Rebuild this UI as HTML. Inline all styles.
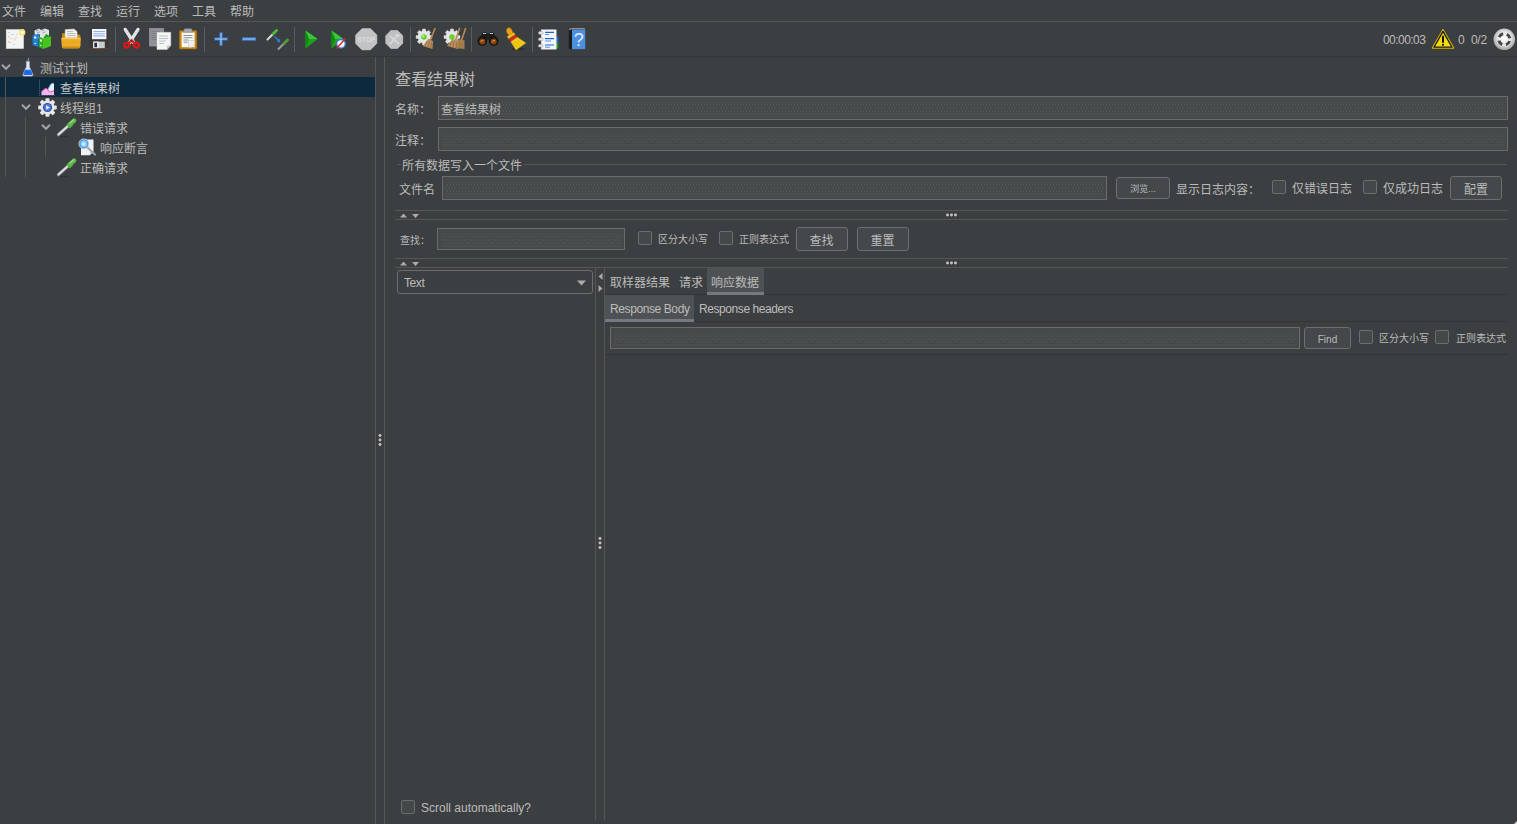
<!DOCTYPE html>
<html lang="zh-CN">
<head>
<meta charset="utf-8">
<title>Apache JMeter</title>
<style>
*{box-sizing:border-box;margin:0;padding:0}
html,body{width:1517px;height:824px;overflow:hidden;background:#3c3f41}
body{position:relative;font-family:"Liberation Sans","Noto Sans CJK SC",sans-serif;font-size:12px;color:#bbbbbb;line-height:1}
.a{position:absolute;white-space:nowrap}
.t{position:absolute;white-space:nowrap;height:16px;line-height:18px;font-size:12px;color:#bbb}
.s{font-size:10px}
.hl{position:absolute;height:1px;background:#555656}
.vl{position:absolute;width:1px;background:#555656}
.dk{background:#323436}
.inp{position:absolute;background:#45494a;border:1px solid #6a6c6c}
.inp::before{content:"";position:absolute;left:3px;top:5px;right:3px;bottom:2px;background-image:radial-gradient(circle,#565a5b .55px,transparent .7px),radial-gradient(circle,#565a5b .55px,transparent .7px);background-size:3px 6px,3px 6px;background-position:0 0,1.5px 3px;opacity:.8}
.btn{position:absolute;background:#44484a;border:1px solid #6c6f70;border-radius:3px;text-align:center;color:#bbb}
.cb{position:absolute;width:14px;height:14px;background:#43494a;border:1px solid #6b6d6e;border-radius:2px}
.ico{position:absolute;width:22px;height:22px}
.tsep{position:absolute;width:1px;top:27px;height:25px;background:#5a5d5f}
svg{display:block;overflow:visible}
</style>
</head>
<body>
<!-- MENU -->
<div id="menubar">
<div class="t" style="left:2px;top:3px">文件</div>
<div class="t" style="left:40px;top:3px">编辑</div>
<div class="t" style="left:78px;top:3px">查找</div>
<div class="t" style="left:116px;top:3px">运行</div>
<div class="t" style="left:154px;top:3px">选项</div>
<div class="t" style="left:192px;top:3px">工具</div>
<div class="t" style="left:230px;top:3px">帮助</div>
</div>
<div class="hl" style="left:0;top:21px;width:1517px;background:#555656"></div>
<!-- TOOLBAR -->
<div id="toolbar">
<!-- new -->
<svg class="a" style="left:5px;top:28px" width="22" height="22" viewBox="0 0 22 22"><rect x="1.2" y="1.6" width="17.4" height="19" fill="#f4f4f2" stroke="#d9d9d6" stroke-width=".6"/><g fill="#bcd3ee"><rect x="3" y="4" width="2" height="1"/><rect x="6" y="6" width="3" height="1"/><rect x="10" y="9" width="2" height="1"/><rect x="4" y="14" width="2" height="1"/><rect x="8" y="16" width="2" height="1"/></g><g fill="#f3b6c8"><rect x="3" y="8" width="1.4" height="1.4"/><rect x="9" y="11" width="1.4" height="1.4"/><rect x="3" y="13" width="1.4" height="1.4"/></g><g fill="#f4dc8a"><rect x="5" y="10" width="3" height="1"/><rect x="11" y="6" width="2" height="1"/></g><circle cx="17.2" cy="4.4" r="3.2" fill="#f3e27a"/><circle cx="17.2" cy="4.4" r="1.6" fill="#fffbe0"/></svg>
<!-- open books -->
<svg class="a" style="left:32px;top:28px" width="22" height="22" viewBox="0 0 22 22"><path d="M2.5 2.5L7 .5L9 2L13 .5L17 2V11H3z" fill="#dfe4e8"/><path d="M4 3l3-1.2M9.5 3l3-1.2M5 5l3-1.2M10.5 5l3-1.2" stroke="#8d969e" stroke-width=".8"/><path d="M.6 7.2L6.5 5.8V19L.6 17z" fill="#1f7fd6"/><path d="M6.5 5.800000000000001L8 6.5V19.5L6.500000000000001 19z" fill="#135ea8"/><path d="M7 8.5L11 10.5V21L7 19z" fill="#2fae16"/><path d="M11 10.5L19 8.5V18L11 21z" fill="#45c41f"/><path d="M11 10.5L14 6L19 8.5" fill="#2a9a12"/><rect x="2" y="8.5" width="2.4" height="2" fill="#e9f3ff"/><rect x="8" y="11.5" width="2" height="2" fill="#e9ffe4"/><circle cx="3.3" cy="15.5" r=".8" fill="#e9f3ff"/><circle cx="8.8" cy="17.5" r=".8" fill="#e9ffe4"/></svg>
<!-- open folder -->
<svg class="a" style="left:60px;top:28px" width="22" height="22" viewBox="0 0 22 22"><path d="M2 5.2H6.5L8 6.5H19.5L20.5 8V19H2z" fill="#c98a14"/><path d="M5.2 1.6L14 1L17 3.6L17.4 11H5z" fill="#f6f6f4" stroke="#c4c4c1" stroke-width=".5"/><path d="M14 1V3.600000000000001H17" fill="#dcdcd9"/><path d="M7 3.6h6M7 5.6h8.5M7 7.6h8.5" stroke="#9aa5b1" stroke-width=".8"/><path d="M1.2 10.8C1.2 10 1.8 9.4 2.600000000000001 9.4H19.5C20.3 9.4 20.9 10 20.8 10.8L20 19C19.9 19.8 19.3 20.4 18.5 20.4H3.5C2.7 20.4 2.1 19.8 2 19z" fill="#ecac28"/><path d="M2.2 10.6H19.8" stroke="#f7cf6c" stroke-width="1.1"/><path d="M2.600000000000001 19.2H19.400000000000002" stroke="#c58610" stroke-width="1.3"/><path d="M3 14.500000000000002H19" stroke="#e0a020" stroke-width=".8" stroke-dasharray="1.5 1.5"/></svg>
<!-- save floppy -->
<svg class="a" style="left:88px;top:28px" width="22" height="22" viewBox="0 0 22 22"><path d="M1.5 1.5H19L20.6 3.1V20.5H1.5z" fill="#3b3735"/><rect x="4" y="1" width="14.4" height="10.2" fill="#f3f6fa"/><path d="M5.5 3.5h11.4M5.5 5.7h11.4M5.5 7.9h11.4" stroke="#8db4e8" stroke-width="1.1"/><rect x="5.2" y="13.600000000000001" width="11.6" height="7" fill="#c9cccf"/><rect x="5.2" y="13.600000000000001" width="5.6" height="7" fill="#e6e8ea"/><rect x="6.4" y="14.8" width="2.6" height="4.4" fill="#2b2826"/><path d="M1.5 20.5H20.6" stroke="#6d3b2b" stroke-width=".8"/></svg>
<div class="tsep" style="left:115px"></div>
<!-- cut -->
<svg class="a" style="left:121px;top:27px" width="22" height="23" viewBox="0 0 22 23"><path d="M4.2 2.4L12.6 15.500000000000002" stroke="#e6e8ea" stroke-width="3.3" stroke-linecap="round"/><path d="M17 2.4L8.6 15.500000000000002" stroke="#e6e8ea" stroke-width="3.3" stroke-linecap="round"/><path d="M4.6 3L12 14.500000000000002M16.6 3L9.2 14.500000000000002" stroke="#aebccc" stroke-width=".7" stroke-dasharray="1.2 1.2"/><ellipse cx="5.8" cy="18.2" rx="2.6" ry="2.2" transform="rotate(-35 5.8 18.2)" fill="none" stroke="#e01616" stroke-width="2.2"/><ellipse cx="15.4" cy="18.2" rx="2.6" ry="2.2" transform="rotate(35 15.4 18.2)" fill="none" stroke="#e01616" stroke-width="2.2"/><path d="M7.500000000000001 16.2L10.6 13.4L13.700000000000001 16.2" stroke="#e01616" stroke-width="2.2" fill="none" stroke-linejoin="round"/><circle cx="10.6" cy="13.2" r=".9" fill="#3a3a3a"/></svg>
<!-- copy -->
<svg class="a" style="left:148px;top:28px" width="24" height="22" viewBox="0 0 24 22"><rect x="1.5" y=".5" width="14" height="17.5" fill="#8e9094" stroke="#a4a6aa" stroke-width=".6"/><path d="M3.5 3.5h9M3.5 5.5h9M3.500000000000001 7.500000000000001h9M3.5 9.5h9M3.5 11.5h5" stroke="#7a7c80" stroke-width=".8"/><path d="M9 4.3H22.8V17.5L19 21.5H9z" fill="#f5f5f3" stroke="#cfcfcc" stroke-width=".5"/><path d="M19 21.5V17.500000000000004H22.8z" fill="#c4c6c8"/><path d="M11 8h9M11 10.5h9M11 13h7M11 15.500000000000002h5" stroke="#a9b3bd" stroke-width=".8"/></svg>
<!-- paste -->
<svg class="a" style="left:178px;top:28px" width="20" height="22" viewBox="0 0 20 22"><rect x="1.4" y="2.5" width="17.4" height="18.5" rx="1" fill="#c8860f" stroke="#9a6508" stroke-width=".6"/><rect x="3.6" y="4.4" width="13" height="14.8" fill="#f6f6f4"/><path d="M6.5 .8h7l1.2 3.400000000000001H5.3z" fill="#a8abad" stroke="#7d8082" stroke-width=".5"/><path d="M5.5 7.500000000000001h9M5.5 9.700000000000001h9M5.5 12h5M5.500000000000001 14.200000000000001h4" stroke="#7f868c" stroke-width=".9"/><path d="M10.5 12.5h6v3.7l-2.8 3H10.500000000000002z" fill="#eef1f4" stroke="#b9bec3" stroke-width=".5"/></svg>
<div class="tsep" style="left:204px"></div>
<!-- plus -->
<svg class="a" style="left:214px;top:32px" width="14" height="14" viewBox="0 0 14 14"><path d="M7 .3V13.700000000000001M.3 7H13.700000000000001" stroke="#3b78cf" stroke-width="3.2"/><path d="M7 1V13M1 7H13" stroke="#a9ccf5" stroke-width="1.1"/></svg>
<!-- minus -->
<svg class="a" style="left:242px;top:36px" width="14" height="6" viewBox="0 0 14 6"><path d="M0 3H14" stroke="#3b78cf" stroke-width="3.6"/><path d="M.8 3H13.200000000000001" stroke="#a9ccf5" stroke-width="1.1"/></svg>
<!-- toggle -->
<svg class="a" style="left:266px;top:28px" width="23" height="22" viewBox="0 0 23 22"><path d="M1.5 11.500000000000002L7 6" stroke="#d6d9db" stroke-width="2" stroke-linecap="round"/><path d="M7.2 5.800000000000001L10.5 2.5" stroke="#55b23c" stroke-width="3" stroke-linecap="round"/><path d="M12.5 21L18 15.500000000000002" stroke="#9a9ea1" stroke-width="2" stroke-linecap="round"/><path d="M18.2 15.3L21.5 12" stroke="#4d9a3a" stroke-width="3" stroke-linecap="round"/><path d="M8.5 8.5L13 13" stroke="#2f7be0" stroke-width="1.4"/><path d="M14.5 14.5L10.6 13.8L13.8 10.6z" fill="#2f7be0"/></svg>
<div class="tsep" style="left:294px"></div>
<!-- start -->
<svg class="a" style="left:305px;top:30px" width="13" height="19" viewBox="0 0 13 19"><path d="M.5 .5L12.5 9L.5 18.5z" fill="#1ea21e"/><path d="M.5 .5L12.5 9L4 9z" fill="#39c93a"/><path d="M.5 .5L4 9L.5 18.5z" fill="#118a12"/></svg>
<!-- start no pauses -->
<svg class="a" style="left:331px;top:30px" width="16" height="19" viewBox="0 0 16 19"><path d="M.5 .5L12.5 9L.5 18.5z" fill="#1ea21e"/><path d="M.5 .5L12.5 9L4 9z" fill="#39c93a"/><path d="M.5 .5L4 9L.5 18.5z" fill="#118a12"/><circle cx="10" cy="13.8" r="4.3" fill="#f2f6fb" stroke="#3a7bd5" stroke-width="1.3"/><path d="M5.5 18.5L14.5 8.5" stroke="#e02020" stroke-width="1.3"/></svg>
<!-- stop -->
<svg class="a" style="left:354.5px;top:27.5px" width="22.5" height="22.5" viewBox="0 0 24 24"><path d="M7.5 .8H16.5L23.2 7.500000000000001V16.5L16.5 23.2H7.500000000000001L.8 16.5V7.500000000000001z" fill="#c2c3c4" stroke="#d2d3d4" stroke-width=".8"/><text x="12" y="15" text-anchor="middle" font-family="Liberation Sans,sans-serif" font-weight="bold" font-size="8" fill="#dcdddd" textLength="19" lengthAdjust="spacingAndGlyphs">STOP</text></svg>
<!-- shutdown -->
<svg class="a" style="left:385px;top:29.5px" width="18.5" height="19" viewBox="0 0 19 20"><path d="M6 .6H13L18.4 6V14L13 19.400000000000002H6L.6 14V6z" fill="#bfc0c1" stroke="#cccdce" stroke-width=".7"/><path d="M5 14.500000000000002L13.500000000000002 6M5.5 6.5L14 14.500000000000002" stroke="#d6d7d8" stroke-width="1.8" stroke-linecap="round"/><path d="M10.5 5.2c2-.9 4 .3 4.300000000000001 2" stroke="#d6d7d8" stroke-width="1.6" fill="none"/></svg>
<div class="tsep" style="left:410px"></div>
<!-- clear -->
<svg class="a" style="left:415px;top:27px" width="22" height="23" viewBox="0 0 22 23"><g transform="translate(9 10)"><g fill="#dcdee0"><rect x="-1.8" y="-8.2" width="3.6" height="16.4" rx=".8"/><rect x="-1.8" y="-8.2" width="3.6" height="16.4" rx=".8" transform="rotate(45)"/><rect x="-1.8" y="-8.2" width="3.6" height="16.4" rx=".8" transform="rotate(90)"/><rect x="-1.8" y="-8.2" width="3.6" height="16.4" rx=".8" transform="rotate(135)"/></g><circle r="6.2" fill="#e3e5e7"/><circle r="2.8" fill="#6fd02a"/><circle cx="-.6" cy="-.8" r="1.1" fill="#c6f59a"/></g><path d="M20 1.5L15 13.500000000000002" stroke="#b98a55" stroke-width="1.6" stroke-linecap="round"/><path d="M13 12L18 14L17.5 22L8 19z" fill="#b78d5c"/><path d="M12 14.500000000000002L10 19.5M14.500000000000002 14.500000000000002L13 20.5M16.5 15.500000000000002L16 21.5" stroke="#8f6a3e" stroke-width=".7"/></svg>
<!-- clear all -->
<svg class="a" style="left:443px;top:27px" width="24" height="23" viewBox="0 0 24 23"><g transform="translate(9 10)"><g fill="#dcdee0"><rect x="-1.8" y="-8.2" width="3.6" height="16.4" rx=".8"/><rect x="-1.8" y="-8.2" width="3.6" height="16.4" rx=".8" transform="rotate(45)"/><rect x="-1.8" y="-8.2" width="3.6" height="16.4" rx=".8" transform="rotate(90)"/><rect x="-1.8" y="-8.2" width="3.6" height="16.4" rx=".8" transform="rotate(135)"/></g><circle r="6.2" fill="#e3e5e7"/><circle r="2.8" fill="#6fd02a"/></g><path d="M16.5 1.5L12.5 13.500000000000002M22.5 1.5L18.5 13.500000000000002" stroke="#b98a55" stroke-width="1.6" stroke-linecap="round"/><path d="M9.5 12L16 13.500000000000002L15 22L4 19z" fill="#b78d5c"/><path d="M15.500000000000002 12L21.5 13.500000000000002L21.5 22L13 21z" fill="#a88050"/><path d="M8.5 14.500000000000002L7 19.5M11 14.500000000000002L10 20.5M13.500000000000002 15.500000000000002L13 21.5M17 15.500000000000002L16.5 21.5M19.5 15.500000000000002L19.5 21.5" stroke="#8f6a3e" stroke-width=".7"/></svg>
<div class="tsep" style="left:471px"></div>
<!-- binoculars -->
<svg class="a" style="left:477px;top:31px" width="22" height="16" viewBox="0 0 22 16"><path d="M5.5 1.5h3.5l2 2l2-2h3.500000000000001l3 6H2.5z" fill="#1c1c1c"/><path d="M6 2.5h3M13 2.5h3" stroke="#bfc2c5" stroke-width="1"/><circle cx="5.3" cy="10" r="4.8" fill="#161616"/><circle cx="16.7" cy="10" r="4.8" fill="#161616"/><circle cx="5.3" cy="10.4" r="3" fill="#8a4414"/><circle cx="16.7" cy="10.4" r="3" fill="#8a4414"/><path d="M3.5 10.5l3-1.2M15 10.5l3-1.2" stroke="#e8902a" stroke-width="1.1"/><rect x="9.5" y="5" width="3" height="4" fill="#222"/></svg>
<!-- broom -->
<svg class="a" style="left:504px;top:27px" width="23" height="24" viewBox="0 0 23 24"><ellipse cx="14" cy="22" rx="7" ry="1.4" fill="#2d2f31"/><path d="M3.6 1.2c1.600000000000001-1 3.8.2 4.4 2.2l1.200000000000001 4.4l-3.2 1.6L3 5.800000000000001C2.2 4.2 2.4 2 3.600000000000001 1.200000000000001z" fill="#e9a21c" stroke="#b97708" stroke-width=".6"/><path d="M3.2 9.600000000000001L9.8 5.4L11.200000000000001 7.500000000000001L4.6 11.8z" fill="#f0c320" stroke="#c79a0a" stroke-width=".5"/><path d="M5 12.200000000000001L11.600000000000001 8L13.4 10.200000000000001L6.800000000000001 14.8z" fill="#e02222"/><path d="M6.800000000000001 14.8L13.4 10.200000000000001L21.8 16L12 23z" fill="#f2cf1d" stroke="#c9a208" stroke-width=".6"/><path d="M9 15.500000000000002L13.500000000000002 21M11 14L16 19.5M13 12.5L18.5 17.5" stroke="#d0a80c" stroke-width=".7"/></svg>
<div class="tsep" style="left:532px"></div>
<!-- function helper list -->
<svg class="a" style="left:538px;top:29px" width="22" height="21" viewBox="0 0 22 21"><rect x="17" y="7.500000000000001" width="3.4" height="6" fill="#1f66d8"/><rect x="17" y="13.500000000000002" width="3.4" height="6" fill="#1f9a1f"/><rect x="3.2" y=".8" width="15" height="19.400000000000002" fill="#f4f5f6" stroke="#d4d6d8" stroke-width=".5"/><g fill="#e8eaec" stroke="#9a9da0" stroke-width=".5"><rect x=".6" y="2.600000000000001" width="4.4" height="2.600000000000001" rx=".6"/><rect x=".6" y="9" width="4.4" height="2.600000000000001" rx=".6"/><rect x=".6" y="15.400000000000002" width="4.4" height="2.600000000000001" rx=".6"/></g><path d="M7 3.3h9M7 9.700000000000001h9M7 16h9" stroke="#1f66d8" stroke-width="1.2"/><path d="M7 5.500000000000001h4M7 12h6M7 18.2h5" stroke="#5a93e8" stroke-width="1"/></svg>
<!-- help -->
<svg class="a" style="left:568px;top:28px" width="18" height="22" viewBox="0 0 18 22"><path d="M.8 1.5L3.5 .8H17.200000000000003V21.2H3.5L.8 20.5z" fill="#1a1c1e"/><rect x="4" y="1.6" width="13.3" height="19.6" fill="#4a8fe0"/><path d="M1 1.5L3.5 .8H17" stroke="#d6d9dc" stroke-width=".8" fill="none"/><text x="10.8" y="18" text-anchor="middle" font-family="Liberation Sans,sans-serif" font-size="18" fill="#e4edf8">?</text></svg>
<!-- right status -->
<div class="t" style="left:1383px;top:31px;letter-spacing:-.55px">00:00:03</div>
<svg class="a" style="left:1431px;top:28px" width="24" height="22" viewBox="0 0 24 22"><path d="M12 1.8L22.4 20H1.6z" fill="#d8b400" stroke="#d8b400" stroke-width="1.6" stroke-linejoin="round"/><path d="M12 3.4L21 19.2H3z" fill="#f6da12" stroke="#1a1a1a" stroke-width="1.3" stroke-linejoin="round"/><path d="M12 8.5V14" stroke="#111" stroke-width="2" stroke-linecap="round"/><circle cx="12" cy="16.8" r="1.1" fill="#111"/></svg>
<div class="t" style="left:1458px;top:31px">0</div>
<div class="t" style="left:1471px;top:31px;letter-spacing:-.3px">0/2</div>
<svg class="a" style="left:1493px;top:28px" width="23" height="23" viewBox="0 0 23 23"><defs><radialGradient id="rg" cx=".5" cy=".45" r=".55"><stop offset="0" stop-color="#ffffff"/><stop offset=".55" stop-color="#e6e6e6"/><stop offset="1" stop-color="#9d9e9f"/></radialGradient></defs><circle cx="11.3" cy="11.3" r="10.8" fill="url(#rg)"/><circle cx="11.3" cy="11.3" r="5.6" fill="none" stroke="#454647" stroke-width="3" stroke-dasharray="5 3.8" stroke-dashoffset="-1.9"/></svg>
</div>

<div class="hl" style="left:0;top:56px;width:1517px;background:#343739"></div>
<!-- TREE -->
<div id="tree">
<div class="a" style="left:0;top:77px;width:375px;height:20px;background:#0d293e"></div>
<div class="vl" style="left:5px;top:77px;height:100px"></div>
<div class="vl" style="left:25px;top:117px;height:60px"></div>
<div class="vl" style="left:45px;top:137px;height:20px"></div>
<!-- chevrons -->
<svg class="a" style="left:1px;top:64px" width="10" height="6"><path d="M1 .8L5 4.8L9 .8" fill="none" stroke="#a0a3a5" stroke-width="2"/></svg>
<svg class="a" style="left:21px;top:104px" width="10" height="6"><path d="M1 .8L5 4.8L9 .8" fill="none" stroke="#a0a3a5" stroke-width="2"/></svg>
<svg class="a" style="left:41px;top:124px" width="10" height="6"><path d="M1 .8L5 4.8L9 .8" fill="none" stroke="#a0a3a5" stroke-width="2"/></svg>
<!-- row 1: flask -->
<svg class="a" style="left:21px;top:58px" width="14" height="19" viewBox="0 0 14 19"><path d="M7.800000000000001 0L6.800000000000001 3" stroke="#9aa4ad" stroke-width=".9" fill="none"/><path d="M5.4 3.4h3v5.4l3.4 7.4c.4 1-.2 1.800000000000001-1.200000000000001 1.800000000000001H3.2c-1 0-1.600000000000001-.8-1.200000000000001-1.800000000000001l3.400000000000001-7.400000000000001z" fill="#dfe8f4" stroke="#a9b6c6" stroke-width=".7"/><path d="M4 11.8h5.800000000000001l1.600000000000001 3.8c.3.8-.2 1.500000000000001-1 1.500000000000001H3.400000000000001c-.8 0-1.300000000000001-.7-1-1.500000000000001z" fill="#1f6cf0"/><path d="M4.2 11.6h5.4" stroke="#8fc0ff" stroke-width="1"/><path d="M5.500000000000001 13.500000000000002l1.500000000000001 1.500000000000001" stroke="#0b3fae" stroke-width="1"/></svg>
<div class="t" style="left:40px;top:60px">测试计划</div>
<!-- row 2: results tree -->
<svg class="a" style="left:39px;top:79px" width="17" height="17" viewBox="0 0 17 17"><path d="M.5 .8v15.7H16" stroke="#5d6d80" stroke-width=".8" fill="none" stroke-dasharray="1.5 1"/><path d="M9 10L11.5 5.500000000000001C12.5 4.3 14 4.2 15 4.5V14L10 13z" fill="#e6eefa"/><path d="M9 10L11.5 5.500000000000001C12.5 4.3 14 4.2 15 4.5" stroke="#5b9bf0" stroke-width=".8" fill="none"/><path d="M2.5 16V12.5L7 9L11 13.200000000000001L15 11.5V16z" fill="#f6b4ec"/><path d="M2.5 12.5L7 9L11 13.200000000000001L15 11.5" stroke="#e052b8" stroke-width="1" fill="none"/></svg>
<div class="t" style="left:60px;top:80px;color:#c6c8ca">查看结果树</div>
<!-- row 3: gear -->
<svg class="a" style="left:38px;top:98px" width="19" height="19" viewBox="0 0 19 19"><g transform="translate(9.5 9.5)"><g fill="#e4e6e8"><rect x="-2" y="-9.3" width="4" height="18.6" rx="1"/><rect x="-2" y="-9.3" width="4" height="18.6" rx="1" transform="rotate(45)"/><rect x="-2" y="-9.3" width="4" height="18.6" rx="1" transform="rotate(90)"/><rect x="-2" y="-9.3" width="4" height="18.6" rx="1" transform="rotate(135)"/></g><circle r="7" fill="#e4e6e8"/><circle r="4.6" fill="#2d4fa8"/><circle r="3.4" fill="#4d7bd8"/><path d="M-1.4 -2.2L2.4 0L-1.4 2.2Z" fill="#e8f0ff"/></g></svg>
<div class="t" style="left:60px;top:100px">线程组1</div>
<!-- row 4: pipette -->
<svg class="a" style="left:57px;top:118px" width="20" height="19" viewBox="0 0 20 19"><path d="M1.4 16.6L12.4 6.8" stroke="#8a9197" stroke-width="3.2" stroke-linecap="round"/><path d="M1.6 16.4L12.4 6.8" stroke="#dfe4e8" stroke-width="1.8" stroke-linecap="round"/><path d="M11 8.6L14.200000000000001 5.7" stroke="#4fa63e" stroke-width="5.2"/><path d="M12.6 6.6L17.2 2.6" stroke="#5cb84a" stroke-width="4.4" stroke-linecap="round"/><path d="M13 5L16.6 1.9" stroke="#93d982" stroke-width="1.5" stroke-linecap="round"/><path d="M3 18.4h9" stroke="#2e3133" stroke-width="1"/></svg>
<div class="t" style="left:80px;top:120px">错误请求</div>
<!-- row 5: assertion -->
<svg class="a" style="left:78px;top:138px" width="19" height="18" viewBox="0 0 19 18"><path d="M3 1.5h12.5v12l-3.8 3.8H3z" fill="#f1f2f3"/><path d="M11.7 17.3v-3.8h3.8" fill="#cfd2d5"/><circle cx="5.8" cy="5.8" r="4.9" fill="#4a9af0" stroke="#c3cad2" stroke-width=".9"/><circle cx="5.8" cy="5.8" r="3.2" fill="#8fd0fa"/><circle cx="5.6" cy="6" r="1.6" fill="#d4f0ff"/><path d="M9.5 9.6L17 16.6" stroke="#9da3a8" stroke-width="2" stroke-linecap="round"/></svg>
<div class="t" style="left:100px;top:140px">响应断言</div>
<!-- row 6: pipette -->
<svg class="a" style="left:57px;top:158px" width="20" height="19" viewBox="0 0 20 19"><path d="M1.4 16.6L12.4 6.8" stroke="#8a9197" stroke-width="3.2" stroke-linecap="round"/><path d="M1.6 16.4L12.4 6.8" stroke="#dfe4e8" stroke-width="1.8" stroke-linecap="round"/><path d="M11 8.6L14.200000000000001 5.7" stroke="#4fa63e" stroke-width="5.2"/><path d="M12.6 6.6L17.2 2.6" stroke="#5cb84a" stroke-width="4.4" stroke-linecap="round"/><path d="M13 5L16.6 1.9" stroke="#93d982" stroke-width="1.5" stroke-linecap="round"/><path d="M3 18.4h9" stroke="#2e3133" stroke-width="1"/></svg>
<div class="t" style="left:80px;top:160px">正确请求</div>
<!-- main splitter dots -->
<svg class="a" style="left:378px;top:434px" width="4" height="12"><circle cx="2" cy="1.5" r="1.45" fill="#c2c4c5"/><circle cx="2" cy="6" r="1.45" fill="#c2c4c5"/><circle cx="2" cy="10.5" r="1.45" fill="#c2c4c5"/></svg>
</div>

<!-- SPLIT -->
<div class="vl" style="left:375px;top:57px;height:767px"></div>
<div class="vl" style="left:384px;top:57px;height:767px"></div>
<!-- PANEL -->
<div id="panel">
<div class="t" style="left:395px;top:70px;font-size:16px;height:20px;line-height:20px">查看结果树</div>
<div class="t" style="left:395px;top:101px">名称：</div>
<div class="inp" style="left:438px;top:96px;width:1070px;height:24px"><div class="t" style="left:2px;top:4px">查看结果树</div></div>
<div class="t" style="left:395px;top:132px">注释：</div>
<div class="inp" style="left:438px;top:127px;width:1070px;height:24px"></div>
<!-- fieldset -->
<div class="hl" style="left:397px;top:164px;width:4px"></div>
<div class="hl" style="left:524px;top:164px;width:983px"></div>
<div class="t" style="left:402px;top:157px">所有数据写入一个文件</div>
<div class="t" style="left:399px;top:181px">文件名</div>
<div class="inp" style="left:442px;top:176px;width:665px;height:24px"></div>
<div class="btn" style="left:1116px;top:177px;width:54px;height:22px;font-size:9px;line-height:23px">浏览...</div>
<div class="t" style="left:1176px;top:181px">显示日志内容：</div>
<div class="cb" style="left:1272px;top:180px"></div>
<div class="t" style="left:1292px;top:180px">仅错误日志</div>
<div class="cb" style="left:1363px;top:180px"></div>
<div class="t" style="left:1383px;top:180px">仅成功日志</div>
<div class="btn" style="left:1450px;top:176px;width:52px;height:24px;line-height:26px">配置</div>
<!-- splitter 1 -->
<div class="hl" style="left:395px;top:210px;width:1113px"></div>
<div class="hl" style="left:395px;top:219px;width:1113px"></div>
<svg class="a" style="left:400px;top:213px" width="20" height="6"><path d="M0 4.5L3.5 0.5L7 4.5Z M12 1L19 1L15.5 5Z" fill="#a9abad"/></svg>
<svg class="a" style="left:946px;top:213px" width="12" height="4"><circle cx="1.5" cy="2" r="1.45" fill="#c2c4c5"/><circle cx="5.5" cy="2" r="1.45" fill="#c2c4c5"/><circle cx="9.5" cy="2" r="1.45" fill="#c2c4c5"/></svg>
<!-- search row -->
<div class="t s" style="left:400px;top:232px">查找：</div>
<div class="inp" style="left:437px;top:228px;width:188px;height:22px"></div>
<div class="cb" style="left:638px;top:231px"></div>
<div class="t s" style="left:658px;top:231px">区分大小写</div>
<div class="cb" style="left:719px;top:231px"></div>
<div class="t s" style="left:739px;top:231px">正则表达式</div>
<div class="btn" style="left:796px;top:227px;width:52px;height:24px;line-height:26px;text-indent:-1px">查找</div>
<div class="btn" style="left:857px;top:227px;width:52px;height:24px;line-height:26px;text-indent:-1px">重置</div>
<!-- splitter 2 -->
<div class="hl" style="left:395px;top:258px;width:1113px"></div>
<div class="hl" style="left:395px;top:267px;width:1113px"></div>
<svg class="a" style="left:400px;top:261px" width="20" height="6"><path d="M0 4.5L3.5 0.5L7 4.5Z M12 1L19 1L15.5 5Z" fill="#a9abad"/></svg>
<svg class="a" style="left:946px;top:261px" width="12" height="4"><circle cx="1.5" cy="2" r="1.45" fill="#c2c4c5"/><circle cx="5.5" cy="2" r="1.45" fill="#c2c4c5"/><circle cx="9.5" cy="2" r="1.45" fill="#c2c4c5"/></svg>
<!-- combobox -->
<div class="a" style="left:397px;top:270px;width:196px;height:24px;border:1px solid #6b6d6e;border-radius:3px;background:#3c3f41"><div class="t" style="left:6px;top:3px;letter-spacing:-.4px">Text</div>
<svg class="a" style="left:179px;top:9px" width="9" height="6"><path d="M0 0.5L9 0.5L4.5 5.5Z" fill="#a9abad"/></svg></div>
<!-- inner vertical splitter -->
<div class="vl" style="left:595px;top:268px;height:552px"></div>
<div class="vl" style="left:604px;top:268px;height:552px"></div>
<svg class="a" style="left:598px;top:273px" width="5" height="20"><path d="M4.5 0L4.5 7L0.5 3.5Z M0.5 12L0.5 19L4.5 15.5Z" fill="#a9abad"/></svg>
<svg class="a" style="left:598px;top:537px" width="4" height="12"><circle cx="2" cy="1.5" r="1.45" fill="#c2c4c5"/><circle cx="2" cy="6" r="1.45" fill="#c2c4c5"/><circle cx="2" cy="10.5" r="1.45" fill="#c2c4c5"/></svg>
<!-- tabs -->
<div class="t" style="left:610px;top:274px">取样器结果</div>
<div class="t" style="left:679px;top:274px">请求</div>
<div class="a" style="left:707px;top:268px;width:57px;height:27px;background:#4e5254;border-bottom:3px solid #747a80"></div>
<div class="t" style="left:711px;top:274px">响应数据</div>
<div class="hl dk" style="left:605px;top:294px;width:102px"></div>
<div class="hl dk" style="left:764px;top:294px;width:744px"></div>
<div class="a" style="left:605px;top:295px;width:89px;height:27px;background:#4e5254;border-bottom:3px solid #747a80"></div>
<div class="t" style="left:610px;top:300px;letter-spacing:-.4px">Response Body</div>
<div class="t" style="left:699px;top:300px;letter-spacing:-.42px">Response headers</div>
<div class="hl dk" style="left:694px;top:321px;width:814px"></div>
<!-- find row -->
<div class="inp" style="left:610px;top:327px;width:690px;height:22px"></div>
<div class="btn" style="left:1304px;top:327px;width:47px;height:22px;font-size:10px;line-height:23px">Find</div>
<div class="cb" style="left:1359px;top:330px"></div>
<div class="t s" style="left:1379px;top:330px">区分大小写</div>
<div class="cb" style="left:1435px;top:330px"></div>
<div class="t s" style="left:1456px;top:330px">正则表达式</div>
<div class="hl dk" style="left:605px;top:354px;width:903px"></div>
<!-- scroll automatically -->
<div class="cb" style="left:401px;top:800px"></div>
<div class="t" style="left:421px;top:799px">Scroll automatically?</div>
</div>

<svg class="a" style="left:1514px;top:821px" width="3" height="3"><path d="M3 0V3H0z" fill="#d8d8d8"/></svg>
</body>
</html>
